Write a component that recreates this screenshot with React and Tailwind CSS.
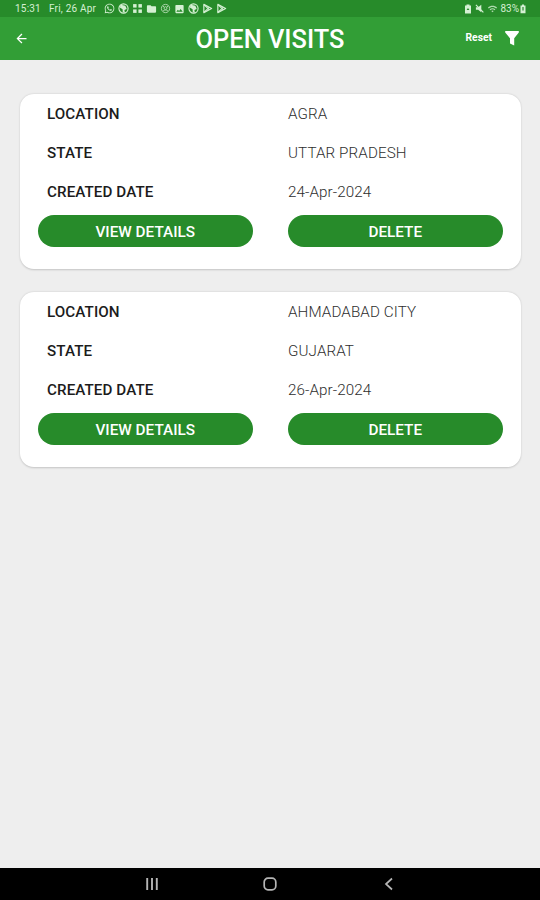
import { MdArrowBack, MdFolder, MdImage, MdWifi } from "react-icons/md";
import { FaWhatsapp } from "react-icons/fa";

const visits = [
  { location: "AGRA", state: "UTTAR PRADESH", date: "24-Apr-2024" },
  { location: "AHMADABAD CITY", state: "GUJARAT", date: "26-Apr-2024" },
];

function BallIcon() {
  return (
    <svg viewBox="0 0 12 12" className="w-[11px] h-[11px]">
      <circle cx="6" cy="6" r="5" fill="none" stroke="currentColor" strokeWidth="1.2" />
      <path d="M3 1.8 L8 3 L9.5 6.5 L7 7.5 L7.5 10.5 L5.2 10 L5 6.8 L2 5 Z" fill="currentColor" />
    </svg>
  );
}

function GridIcon() {
  return (
    <svg viewBox="0 0 12 12" className="w-[11px] h-[11px]" fill="currentColor">
      <rect x="1.2" y="1.2" width="3.8" height="3.8" />
      <rect x="7" y="1.2" width="3.8" height="3.8" />
      <rect x="1.2" y="7" width="3.8" height="3.8" />
      <rect x="7" y="7" width="3.8" height="3.8" />
    </svg>
  );
}

function SwirlIcon() {
  return (
    <svg viewBox="0 0 12 12" className="w-[11px] h-[11px] opacity-80" fill="none" stroke="currentColor">
      <circle cx="6" cy="6" r="4.5" />
      <circle cx="6" cy="5.6" r="1.6" />
      <path d="M3 3 L4.5 4.5 M9 3 L7.5 4.5 M3.4 8.6 C5 7.4 7 7.4 8.6 8.6" />
    </svg>
  );
}

function PlayIcon() {
  return (
    <svg viewBox="0 0 12 12" className="w-[11px] h-[11px]" fill="none" stroke="currentColor" strokeWidth="1.3">
      <path d="M2 1.5 L10.5 6 L2 10.5 Z" strokeLinejoin="round" />
      <path d="M2.4 2 L7.8 7.3 M2.4 10 L7.8 4.7" />
    </svg>
  );
}

function SaverIcon() {
  return (
    <svg viewBox="0 0 8 10" className="mr-[3px] w-2 h-[10px]">
      <path d="M2.5 0.5 H5.5 V1.5 H7 V9.5 H1 V1.5 H2.5 Z" fill="currentColor" />
      <path d="M2.6 6 L4 4 L5.4 6 Z" fill="#278b2a" />
    </svg>
  );
}

function MuteIcon() {
  return (
    <svg viewBox="0 0 10 10" className="mr-[3px] w-[9px] h-[9px]">
      <path d="M1 3.5 H3.5 L7 0.8 V9.2 L3.5 6.5 H1 Z" fill="currentColor" />
      <path d="M1 1 L9.3 9.3" stroke="currentColor" strokeWidth="1.3" />
    </svg>
  );
}

function BatteryIcon() {
  return (
    <svg viewBox="0 0 6 10" className="ml-[1px] w-[6px] h-[10px]">
      <path d="M2 0.5 H4 V1.5 H5.5 V9.3 H0.5 V1.5 H2 Z" fill="currentColor" />
      <path d="M3 3 V6.5" stroke="#278b2a" strokeWidth="1.2" />
    </svg>
  );
}

function StatusBar() {
  return (
    <div className="flex h-[17px] items-center justify-between bg-[#278b2a] pl-[15px] pr-[14px] text-[10px] text-[#d5f0d3]">
      <div className="flex items-center">
        <span className="w-[34px] tracking-[0.2px]">15:31</span>
        <span className="w-[54.5px] whitespace-nowrap tracking-[0.2px]">Fri, 26 Apr</span>
        <div className="flex items-center gap-[3px]">
          <FaWhatsapp className="w-[11px] h-[11px]" />
          <BallIcon />
          <GridIcon />
          <MdFolder className="w-[11px] h-[12px]" />
          <SwirlIcon />
          <MdImage className="w-[11px] h-[12px]" />
          <BallIcon />
          <PlayIcon />
          <PlayIcon />
        </div>
      </div>
      <div className="flex items-center">
        <SaverIcon />
        <MuteIcon />
        <MdWifi className="w-[11px] h-[10px] mr-[2px] opacity-80" />
        <span className="text-[10px]">83%</span>
        <BatteryIcon />
      </div>
    </div>
  );
}

function Header() {
  return (
    <header className="grid h-[42.5px] grid-cols-[1fr_auto_1fr] items-center bg-[#329e36] pl-[14px] pr-[20px] text-white">
      <MdArrowBack className="w-[15px] h-[15px]" />
      <h1 className="pl-[6px] pt-[3px] text-[25.4px] font-medium leading-none">OPEN VISITS</h1>
      <div className="flex items-center justify-end gap-[12px]">
        <span className="pb-[2px] text-[10.3px] font-bold">Reset</span>
        <svg viewBox="0 0 16 16" className="w-4 h-4" fill="currentColor">
          <path d="M1.2 1 H14.8 V2.5 L10.2 8.3 V15.6 L6 13.5 V8.3 L1.2 2.5 Z" />
        </svg>
      </div>
    </header>
  );
}

function Row({ label, value }) {
  return (
    <div className="grid h-[38.8px] grid-cols-[241px_1fr] items-center pl-[27px] text-[15.2px]">
      <span className="font-medium tracking-[0.08px] text-[#1c1c1c]">{label}</span>
      <span className="font-light tracking-[0.1px] text-[#2e2e2e]">{value}</span>
    </div>
  );
}

function VisitCard({ visit }) {
  return (
    <div className="h-[175px] rounded-[14px] bg-white pt-[1px] shadow-[0_0.5px_2px_rgba(0,0,0,0.18)]">
      <Row label="LOCATION" value={visit.location} />
      <Row label="STATE" value={visit.state} />
      <Row label="CREATED DATE" value={visit.date} />
      <div className="mt-[3.6px] flex justify-between pl-[17.5px] pr-[17.5px]">
        <button className="h-8 w-[215.5px] rounded-full bg-[#278b2a] pt-[2px] text-[15.3px] font-medium text-white">
          VIEW DETAILS
        </button>
        <button className="h-8 w-[215.5px] rounded-full bg-[#278b2a] pt-[2px] text-[15.3px] font-medium text-white">
          DELETE
        </button>
      </div>
    </div>
  );
}

function NavBar() {
  return (
    <nav className="flex h-8 items-center justify-center bg-black text-[#b5b5b5]">
      <svg viewBox="0 0 14 14" className="w-[14px] h-[14px]" stroke="currentColor" strokeWidth="1.9">
        <path d="M2.2 1 V13 M7 1 V13 M11.8 1 V13" />
      </svg>
      <svg viewBox="0 0 14 14" className="mx-[104px] w-[14px] h-[14px]" fill="none" stroke="currentColor" strokeWidth="1.7">
        <rect x="1.2" y="1.2" width="11.6" height="11.6" rx="3.8" />
      </svg>
      <svg viewBox="0 0 14 14" className="w-[14px] h-[14px]" fill="none" stroke="currentColor" strokeWidth="1.7">
        <path d="M11 1.5 L5 7 L11 12.5" />
      </svg>
    </nav>
  );
}

export default function App() {
  return (
    <div className="flex h-screen flex-col bg-[#eeeeee] font-[Roboto,sans-serif]">
      <StatusBar />
      <Header />
      <main className="flex flex-1 flex-col gap-[23px] pl-[20px] pr-[19.5px] pt-[34.5px]">
        {visits.map((visit) => (
          <VisitCard key={visit.location} visit={visit} />
        ))}
      </main>
      <NavBar />
    </div>
  );
}
